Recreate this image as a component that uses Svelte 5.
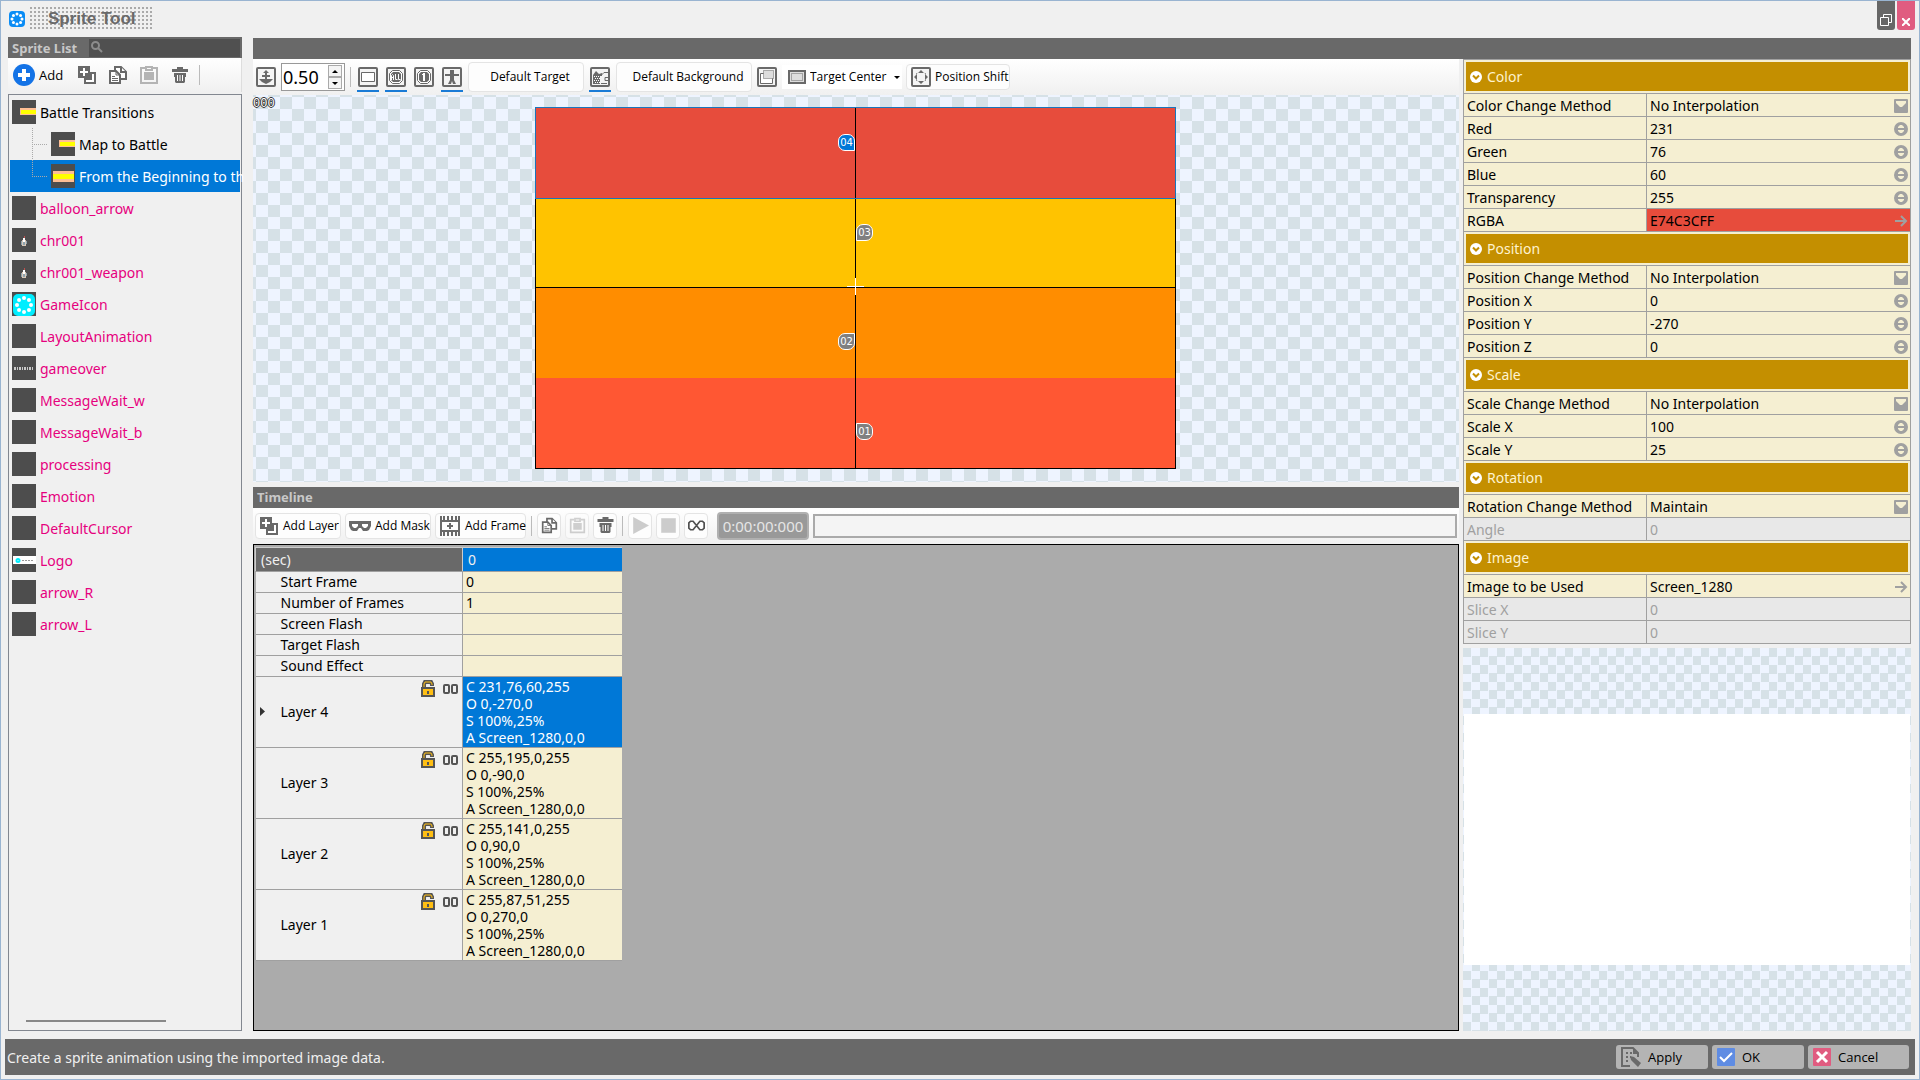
<script>
  let search = $state(``)
  let zoom = $state(`0.50`)
  let anchor = $state(`Target Center`)
  let selected = $state(`From the Beginning to th`)
  let activeLayer = $state(4)

  const sprites = [
    { name: `Battle Transitions`, thumb: `right`, kind: `own` },
    { name: `Map to Battle`, thumb: `right`, kind: `own`, child: true },
    { name: `From the Beginning to th`, thumb: `wide`, kind: `own`, child: true },
    { name: `balloon_arrow` },
    { name: `chr001`, thumb: `chr` },
    { name: `chr001_weapon`, thumb: `chr` },
    { name: `GameIcon`, thumb: `game` },
    { name: `LayoutAnimation` },
    { name: `gameover`, thumb: `over` },
    { name: `MessageWait_w` },
    { name: `MessageWait_b` },
    { name: `processing` },
    { name: `Emotion` },
    { name: `DefaultCursor` },
    { name: `Logo`, thumb: `logo` },
    { name: `arrow_R` },
    { name: `arrow_L` },
  ]

  const frameRows = [
    [`Start Frame`, `0`],
    [`Number of Frames`, `1`],
    [`Screen Flash`, ``],
    [`Target Flash`, ``],
    [`Sound Effect`, ``],
  ]

  const layers = [
    { id: 4, color: [231, 76, 60], y: -270 },
    { id: 3, color: [255, 195, 0], y: -90 },
    { id: 2, color: [255, 141, 0], y: 90 },
    { id: 1, color: [255, 87, 51], y: 270 },
  ]

  const groups = $state([
    {
      title: `Color`,
      rows: [
        { label: `Color Change Method`, value: `No Interpolation`, type: `select` },
        { label: `Red`, value: `231`, type: `spin` },
        { label: `Green`, value: `76`, type: `spin` },
        { label: `Blue`, value: `60`, type: `spin` },
        { label: `Transparency`, value: `255`, type: `spin` },
        { label: `RGBA`, value: `E74C3CFF`, type: `link`, red: true },
      ],
    },
    {
      title: `Position`,
      rows: [
        { label: `Position Change Method`, value: `No Interpolation`, type: `select` },
        { label: `Position X`, value: `0`, type: `spin` },
        { label: `Position Y`, value: `-270`, type: `spin` },
        { label: `Position Z`, value: `0`, type: `spin` },
      ],
    },
    {
      title: `Scale`,
      rows: [
        { label: `Scale Change Method`, value: `No Interpolation`, type: `select` },
        { label: `Scale X`, value: `100`, type: `spin` },
        { label: `Scale Y`, value: `25`, type: `spin` },
      ],
    },
    {
      title: `Rotation`,
      rows: [
        { label: `Rotation Change Method`, value: `Maintain`, type: `select` },
        { label: `Angle`, value: `0`, disabled: true },
      ],
    },
    {
      title: `Image`,
      rows: [
        { label: `Image to be Used`, value: `Screen_1280`, type: `link` },
        { label: `Slice X`, value: `0`, disabled: true },
        { label: `Slice Y`, value: `0`, disabled: true },
      ],
    },
  ])

  const dots = [0, 45, 90, 135, 180, 225, 270, 315].map((deg) => {
    const rad = (deg * Math.PI) / 180
    return [Math.cos(rad), Math.sin(rad)]
  })
  const fieldId = (label) => label.toLowerCase().replaceAll(` `, `-`)
</script>

{#snippet thumb(kind)}
  <svg class="thumb" width="24" height="24" viewBox="0 0 24 24">
    <rect width="24" height="24" fill="#4d4d4d" />
    {#if kind === `right`}
      <path fill="#ffbf94" d="M8 8h16v7H8z" />
      <path fill="#ff0" d="M9 10h15v4H9z" />
    {:else if kind === `wide`}
      <path fill="#ffbf94" d="M2 7h21v11H2z" />
      <path fill="#ff0" d="M2 10h21v5H2z" />
    {:else if kind === `chr`}
      <path fill="#d8c8b8" d="M10 12h4v6h-4z" />
      <path fill="#8fa3ad" d="M9 13h1v4H9zM14 13h1v3h-1zM11 14h2v3h-2z" />
      <path fill="#fff" d="M11 10h2v4h-2z" />
      <path fill="#c0504d" d="M12 8h1v2h-1z" />
    {:else if kind === `game`}
      <rect x="1" y="2" width="22" height="22" rx="5" fill="#0ef" />
      {#each dots as [x, y]}
        <circle cx={12 + x * 7} cy={13 + y * 7} r="2" fill="#fff" />
      {/each}
    {:else if kind === `over`}
      <path stroke="#fff" stroke-width="3" stroke-dasharray="2 1 1 1" opacity=".7" d="M2 12.500h20" />
    {:else if kind === `logo`}
      <path fill="#fff" d="M1 8h23v8H1z" />
      <circle cx="6" cy="12.500" r="1.500" fill="none" stroke="#0ef" stroke-width="2" />
      <path stroke="#999" stroke-width="1" stroke-dasharray="2 1" d="M10 12.500h11" />
    {/if}
  </svg>
{/snippet}

{#snippet copyIcon()}
  <svg width="20" height="20" viewBox="0 0 20 20" fill="#fff" stroke="#696969" stroke-width="2">
    <path d="M7 2h6l5 5v7H7z" />
    <path d="M13 2v5h5" />
    <path d="M2 6h6l4 4v8H2z" />
    <path fill="none" stroke-width="1" d="M4 11.500h3M4 13.500h6M4 15.500h6M8 6v4h4" />
  </svg>
{/snippet}

{#snippet pasteIcon()}
  <svg width="20" height="20" viewBox="0 0 20 20" fill="none" stroke="#b4b4b4" stroke-width="2">
    <path d="M6 3H2v15h16V3h-4" />
    <path d="M7 5V2h6v3z" />
    <path fill="#b4b4b4" stroke="none" d="M5 7h10v8H5z" />
  </svg>
{/snippet}

{#snippet trashIcon()}
  <svg width="16" height="17" viewBox="0 0 16 17" fill="#696969">
    <path d="M5 0h6v2h5v3H0V2h5zM2 6h12v4h-1v5l-1 1H4l-1-1v-5H2z" />
    <path stroke="#fff" d="M5.500 8v6M8 8v6M10.500 8v6" />
  </svg>
{/snippet}

{#snippet addLayerIcon()}
  <svg width="18" height="18" viewBox="0 0 18 18">
    <path fill="#696969" d="M6 6h12v12H6zM0 0h12v12H0z" />
    <path fill="#fff" d="M14 8h2v8H8v-2h6zM5 2h2v3h3v2H7v3H5V7H2V5h3z" />
  </svg>
{/snippet}

{#snippet boxed(name)}
  <svg width="20" height="20" viewBox="0 0 20 20" fill="none" stroke="#696969">
    <rect x="1" y="1" width="18" height="18" rx="1" fill="#f4f4f4" stroke-width="2" />
    {#if name === `zoom`}
      <path fill="#696969" stroke="none" d="M10 3l3 3h-2v2h3v2h-3v2h6l-3 3-4 2-4-2-3-3h6v-2H6V8h3V6H7z" />
    {:else if name === `frame`}
      <path fill="#fff" d="M3.500 5.500h13v9h-13z" />
    {:else if name === `all` || name === `one`}
      <path fill="#fff" d="M6.500 3.500h7l3 3v7l-3 3h-7l-3-3v-7z" />
      <path fill="#696969" stroke="none" d="M7 5h6l2 2v6l-2 2H7l-2-2V7z" />
      {#if name === `all`}
        <path stroke="#fff" d="M5.500 13V8.500l1-1 1 1V13M5.500 10.500h2M9.500 7v5.500h2M12.500 7v5.500h2" />
      {:else}
        <path fill="#fff" stroke="none" d="M9 6h2v8H9zM8 7h1v1H8z" />
      {/if}
    {:else if name === `body`}
      <path fill="#696969" stroke="none" d="M8 3h4v4h5v2h-5v4l2 4h-3l-1-3-1 3H6l2-4V9H3V7h5z" />
    {:else if name === `scene`}
      <path fill="#696969" stroke="none" d="M3 17V8l3-4 3 3 3-1v3h-2v8z" />
      <path stroke="#fff" stroke-dasharray="1 1" d="M4 9.500h6M5 11.500h6M4 13.500h6M5 15.500h6" />
      <path d="M11 8.500l3-3h5v5h-4v3h4M11 16.500h6" />
    {:else if name === `overlap`}
      <path fill="#fff" d="M3.500 6.500h12v10h-12z" />
      <path fill="#ddd" stroke-dasharray="1 1" d="M6.500 3.500h10v8h-10z" />
    {:else if name === `shift`}
      <path fill="#696969" stroke="none" d="M10 3l3 3H7zM10 17l3-3H7zM3 10l3-3v6zM17 10l-3-3v6z" />
      <path stroke-dasharray="1 1" d="M5 7l2-1M15 7l-2-1M5 13l2 1M15 13l-2 1" />
    {/if}
  </svg>
{/snippet}

{#snippet fieldIcon(type)}
  <svg class="field-icon" width="14" height="14" viewBox="0 0 14 14">
    {#if type === `select`}
      <rect width="14" height="14" rx="1" fill="#a0a0a0" />
      <path fill="#f5efd2" d="M2 2h10v2L8 8H6L2 4z" />
    {:else if type === `spin`}
      <circle cx="7" cy="7" r="7" fill="#a0a0a0" />
      <path fill="#f5efd2" d="M4 5l2-2h2l2 2v1H4zM4 8h6v1l-2 2H6L4 9z" />
    {:else if type === `link`}
      <path fill="none" stroke="#a0a0a0" stroke-width="2" d="M1 7h11M7 2l5 5-5 5" />
    {/if}
  </svg>
{/snippet}

<div class="window">
  <header class="titlebar">
    <svg width="16" height="16" viewBox="0 0 16 16">
      <rect width="16" height="16" rx="4" fill="#0a8cf5" />
      {#each dots as [x, y]}
        <circle cx={8 + x * 5} cy={8 + y * 5} r="1.500" fill="#fff" />
      {/each}
    </svg>
    <h1>Sprite Tool</h1>
    <div class="window-buttons">
      <button aria-label="Restore">
        <svg width="12" height="12" viewBox="0 0 12 12" fill="none" stroke="#fff">
          <path d="M3.500 3.500v-3h8v8h-3M.5 3.500h8v8h-8z" />
        </svg>
      </button>
      <button class="close" aria-label="Close">
        <svg width="8" height="8" viewBox="0 0 8 8" stroke="#fff" stroke-width="2">
          <path d="M0 0l8 8M8 0L0 8" />
        </svg>
      </button>
    </div>
  </header>

  <main>
    <aside>
      <div class="bar list-bar">
        <h2>Sprite List</h2>
        <label class="search">
          <svg width="12" height="12" viewBox="0 0 12 12" fill="none" stroke="#8c8c8c" stroke-width="2">
            <circle cx="4.500" cy="4.500" r="3.500" />
            <path d="M7 7l4 4" />
          </svg>
          <input bind:value={search} aria-label="Search sprites" />
        </label>
      </div>
      <div class="list-tools">
        <button class="add">
          <svg width="22" height="22" viewBox="0 0 22 22">
            <circle cx="11" cy="11" r="11" fill="#1473e6" />
            <path fill="#fff" d="M9 5h4v4h4v4h-4v4H9v-4H5V9h4z" />
          </svg>
          Add
        </button>
        <button aria-label="Duplicate">{@render addLayerIcon()}</button>
        <button aria-label="Copy">{@render copyIcon()}</button>
        <button aria-label="Paste">{@render pasteIcon()}</button>
        <button aria-label="Delete">{@render trashIcon()}</button>
        <span class="sep"></span>
      </div>
      <div class="list-box">
        <ul>
          {#each sprites as sprite}
            <li class:child={sprite.child} class:selected={selected === sprite.name}>
              <button class="sprite" class:own={sprite.kind === `own`} onclick={() => (selected = sprite.name)}>
                {@render thumb(sprite.thumb)}
                <span>{sprite.name}</span>
              </button>
            </li>
          {/each}
        </ul>
        <div class="scrollbar"></div>
      </div>
    </aside>

    <section class="work">
      <div class="bar"></div>
      <div class="columns">
        <div class="center">
          <div class="tools">
            <button class="tool" aria-label="Zoom">{@render boxed(`zoom`)}</button>
            <div class="zoom">
              <input bind:value={zoom} aria-label="Zoom level" />
              <div class="steps">
                <button aria-label="Zoom in"><svg width="6" height="3"><path d="M0 3l3-3 3 3z" /></svg></button>
                <button aria-label="Zoom out"><svg width="6" height="3"><path d="M0 0l3 3 3-3z" /></svg></button>
              </div>
            </div>
            <span class="sep"></span>
            <button class="toggle on" aria-label="Show frame">{@render boxed(`frame`)}</button>
            <button class="toggle on" aria-label="Show all numbers">{@render boxed(`all`)}</button>
            <button class="toggle" aria-label="Show one number">{@render boxed(`one`)}</button>
            <button class="toggle on" aria-label="Show target">{@render boxed(`body`)}</button>
            <button class="pick target">Default Target</button>
            <button class="toggle on" aria-label="Show background">{@render boxed(`scene`)}</button>
            <button class="pick background">Default Background</button>
            <button class="tool" aria-label="Overlap">{@render boxed(`overlap`)}</button>
            <label class="anchor">
              <svg width="18" height="14" viewBox="0 0 18 14" stroke="#696969">
                <rect x="1" y="1" width="16" height="12" fill="#ddd" stroke-width="2" />
                <path fill="none" stroke-dasharray="1 1" d="M3.500 3.500h11v7h-11z" />
              </svg>
              <select bind:value={anchor} aria-label="Anchor"><option>Target Center</option></select>
              <svg width="6" height="3"><path d="M0 0l3 3 3-3z" /></svg>
            </label>
            <button class="raised shift">{@render boxed(`shift`)}Position Shift</button>
          </div>

          <div class="canvas">
            <span class="counter">000</span>
            <div class="stage">
              {#each layers as layer}
                <div class="band" class:active={layer.id === activeLayer} style="background: rgb({layer.color.join(`,`)})">
                  <span class="tag" class:odd={layer.id % 2} class:low={layer.id < 3}>0{layer.id}</span>
                </div>
              {/each}
              <svg class="cross" width="17" height="17" viewBox="0 0 17 17"><path stroke="#fff" d="M8.500 0v17M0 8.500h17" /></svg>
            </div>
          </div>

          <div class="bar timeline-bar"><h2>Timeline</h2></div>
          <div class="tools">
            <button class="raised">{@render addLayerIcon()}Add Layer</button>
            <button class="raised mask">
              <svg width="22" height="10" viewBox="0 0 22 10">
                <path fill="#696969" d="M0 0h22v5l-2 4-2 1h-4l-2-3h-2l-2 3H4L2 9 0 5z" />
                <path fill="#fff" d="M3 3h6v2L7 7H5L3 5zM13 3h6v2l-2 2h-2l-2-2z" />
              </svg>
              Add Mask
            </button>
            <button class="raised film">
              <svg width="20" height="20" viewBox="0 0 20 20" fill="none" stroke="#696969" stroke-width="2">
                <path d="M1 0v20M19 0v20M0 5h20M0 15h20M10 7v6M7 10h6" />
                <path stroke-width="4" stroke-dasharray="2 2" d="M3 2h16M3 18h16" />
              </svg>
              Add Frame
            </button>
            <span class="sep"></span>
            <button class="raised square" aria-label="Copy frame">{@render copyIcon()}</button>
            <button class="raised square faded" aria-label="Paste frame">{@render pasteIcon()}</button>
            <button class="raised square" aria-label="Delete frame">{@render trashIcon()}</button>
            <span class="sep"></span>
            <button class="raised square" aria-label="Play"><svg width="14" height="14" viewBox="0 0 14 14"><path fill="#ccc" d="M1 0l13 7-13 7z" /></svg></button>
            <button class="raised square" aria-label="Stop"><svg width="14" height="14" viewBox="0 0 14 14"><path fill="#ccc" d="M1 1h12v12H1z" /></svg></button>
            <button class="raised square" aria-label="Loop">
              <svg width="20" height="12" viewBox="0 0 20 12" fill="none" stroke="#505050" stroke-width="2">
                <path d="M10 6L6 1H3L1 3v6l2 2h3l8-10h3l2 2v6l-2 2h-3z" />
              </svg>
            </button>
            <output>0:00:00:000</output>
            <div class="track"></div>
          </div>

          <div class="timeline">
            <table>
              <thead>
                <tr><th scope="col">(sec)</th><th scope="col" class="frame">0</th></tr>
              </thead>
              <tbody>
                {#each frameRows as [label, value]}
                  <tr><th scope="row"><div class="name">{label}</div></th><td>{value}</td></tr>
                {/each}
                {#each layers as layer}
                  <tr class="layer" class:active={layer.id === activeLayer} onclick={() => (activeLayer = layer.id)}>
                    <th scope="row">
                      <div class="layer-head">
                        <svg class="caret" width="5" height="9" viewBox="0 0 5 9"><path fill="#333" d="M0 0l5 4.500-5 4.500z" /></svg>
                        <span>Layer {layer.id}</span>
                        <button aria-label="Lock layer">
                          <svg width="14" height="17" viewBox="0 0 14 17">
                            <path fill="none" stroke="#555" stroke-width="4" d="M3 9V4l1-2h6l1 2v2" />
                            <path fill="none" stroke="#ffbf14" stroke-width="1" d="M3 9V4l1-2h6l1 2v1" />
                            <path fill="#ffbf14" stroke="#555" stroke-width="2" d="M1 8h12v8H1z" />
                            <path fill="#555" d="M6 11h2v3H6z" />
                          </svg>
                        </button>
                        <button aria-label="Link layer">
                          <svg width="15" height="10" viewBox="0 0 15 10" fill="none" stroke="#555" stroke-width="2">
                            <rect x="1" y="1" width="5" height="8" rx="1" />
                            <rect x="9" y="1" width="5" height="8" rx="1" />
                          </svg>
                        </button>
                      </div>
                    </th>
                    <td>
                      C {layer.color.join(`,`)},255<br />O 0,{layer.y},0<br />S 100%,25%<br />A Screen_1280,0,0
                    </td>
                  </tr>
                {/each}
              </tbody>
            </table>
          </div>
        </div>

        <div class="right">
          <table class="props">
            <colgroup><col class="label-col" /><col /></colgroup>
            {#each groups as group}
              <tbody>
                <tr class="group">
                  <th colspan="2">
                    <button>
                      <svg width="12" height="12" viewBox="0 0 12 12">
                        <circle cx="6" cy="6" r="6" fill="#fff" />
                        <path fill="none" stroke="#c48f00" stroke-width="2" d="M3 4.500l3 3 3-3" />
                      </svg>
                      {group.title}
                    </button>
                  </th>
                </tr>
                {#each group.rows as row}
                  <tr class:disabled={row.disabled}>
                    <th scope="row"><label for={fieldId(row.label)}>{row.label}</label></th>
                    <td class:red={row.red}>
                      <div class="field">
                        {#if row.type === `select`}
                          <select id={fieldId(row.label)} bind:value={row.value}>
                            <option>No Interpolation</option>
                            <option>Maintain</option>
                          </select>
                        {:else}
                          <input id={fieldId(row.label)} bind:value={row.value} disabled={row.disabled} />
                        {/if}
                        {@render fieldIcon(row.type)}
                      </div>
                    </td>
                  </tr>
                {/each}
              </tbody>
            {/each}
          </table>
          <div class="preview"><div class="image"></div></div>
        </div>
      </div>
    </section>
  </main>

  <footer>
    <p>Create a sprite animation using the imported image data.</p>
    <button>
      <svg width="20" height="20" viewBox="0 0 20 20" fill="none" stroke="#696969" stroke-width="2">
        <path d="M9 19H1V1h11l5 5v4" />
        <path stroke-dasharray="2 2" d="M5 6h7M5 10h5M5 14h4" />
        <path fill="#696969" stroke="none" d="M12 1l6 6h-6zM9 9l4 1 7 6-3 4-7-7z" />
      </svg>
      Apply
    </button>
    <button>
      <svg width="18" height="18" viewBox="0 0 18 18">
        <rect width="18" height="18" rx="1" fill="#5f8ce3" />
        <path fill="none" stroke="#fff" stroke-width="2" d="M3 9l4 4 8-8" />
      </svg>
      OK
    </button>
    <button class="cancel">
      <svg width="18" height="18" viewBox="0 0 18 18">
        <rect width="18" height="18" rx="1" fill="#e05c80" />
        <path stroke="#fff" stroke-width="3" d="M4 4l10 10M14 4L4 14" />
      </svg>
      Cancel
    </button>
  </footer>
</div>

<style>
  :global(body) {
    margin: 0;
  }
  .window {
    --grey: #696969;
    --cream: #f5efd2;
    --line: #a0a0a0;
    --blue: #0078d7;
    --ui: "Open Sans", "Noto Sans", sans-serif;
    box-sizing: border-box;
    display: flex;
    flex-direction: column;
    min-height: 100vh;
    border: 1px solid #99b4d1;
    background: #f0f0f0;
    color: #000;
    font: 14px/17px "Noto Sans", sans-serif;
  }
  button,
  input,
  select {
    box-sizing: border-box;
    margin: 0;
    padding: 0;
    border: none;
    border-radius: 0;
    background: none;
    color: inherit;
    font: inherit;
    outline: none;
    appearance: none;
  }
  button {
    display: flex;
    align-items: center;
    cursor: pointer;
    white-space: nowrap;
  }
  svg {
    display: block;
    flex: none;
  }
  h1,
  h2,
  p,
  ul {
    margin: 0;
    padding: 0;
  }

  .titlebar {
    display: flex;
    align-items: center;
    gap: 5px;
    height: 36px;
    padding: 0 4px 0 8px;
  }
  h1 {
    box-sizing: border-box;
    width: 123px;
    height: 24px;
    padding-left: 18px;
    background: radial-gradient(circle at 1px 1px, #aaa 1px, transparent 1px) 0 0 / 4px 4px;
    color: var(--grey);
    font: bold 17px/24px "Liberation Sans Narrow", "Liberation Sans", sans-serif;
    white-space: nowrap;
  }
  .window-buttons {
    display: flex;
    align-self: flex-start;
    gap: 2px;
    margin-left: auto;
  }
  .window-buttons button {
    width: 18px;
    height: 29px;
    padding-bottom: 4px;
    border-radius: 0 0 3px 3px;
    background: #666;
    align-items: flex-end;
    justify-content: center;
  }
  .window-buttons .close {
    background: #e05c80;
  }

  main {
    display: flex;
    flex: 1;
    gap: 11px;
    padding: 0 8px 0 7px;
  }
  aside {
    display: flex;
    flex: none;
    flex-direction: column;
    width: 234px;
  }
  .bar {
    display: flex;
    flex: none;
    align-items: center;
    height: 21px;
    padding-left: 4px;
    background: var(--grey);
  }
  h2 {
    color: #c8c8c8;
    font: bold 13px/17px "Noto Sans", sans-serif;
    white-space: nowrap;
  }
  .list-bar {
    gap: 12px;
    padding-right: 2px;
  }
  .list-bar h2 {
    padding-top: 2px;
  }
  .search {
    display: flex;
    flex: 1;
    gap: 4px;
    height: 18px;
    min-width: 0;
    padding: 2px;
    box-sizing: border-box;
    background: #505050;
  }
  .search input {
    flex: 1;
    min-width: 0;
    color: #fff;
  }
  .list-tools {
    display: flex;
    align-items: center;
    height: 34px;
    padding-left: 5px;
    border-right: 1px solid #ddd;
    background: linear-gradient(#fff, #f0f0f0);
  }
  .list-tools button {
    justify-content: center;
    width: 31px;
  }
  .list-tools .add {
    gap: 4px;
    width: 58px;
    justify-content: flex-start;
    font: 13px/18px var(--ui);
  }
  .sep {
    width: 1px;
    height: 20px;
    margin: 0 1px;
    background: #bbb;
  }
  .list-tools .sep {
    margin-left: 4px;
  }
  .list-box {
    display: flex;
    flex: 1;
    flex-direction: column;
    justify-content: space-between;
    margin-top: 2px;
    padding: 1px;
    border: 1px solid #828790;
  }
  ul {
    list-style: none;
  }
  li {
    position: relative;
    padding-left: 2px;
  }
  li.child {
    padding-left: 41px;
  }
  li.selected {
    background: var(--blue);
  }
  li.child::before {
    content: "";
    position: absolute;
    left: 22px;
    top: -16px;
    width: 14px;
    height: 32px;
    border: 1px dotted #aaa;
    border-width: 0 0 1px 1px;
  }
  li.child:nth-child(2)::before {
    top: 0;
    height: 16px;
  }
  .sprite {
    gap: 4px;
    width: 100%;
    height: 32px;
    color: #e6007e;
  }
  .sprite.own {
    color: #000;
  }
  .selected .sprite {
    color: #fff;
  }
  .scrollbar {
    width: 140px;
    height: 2px;
    margin: 0 0 7px 16px;
    background: #888;
  }

  .work {
    display: flex;
    flex: 1;
    flex-direction: column;
    min-width: 0;
    padding-top: 1px;
  }
  .columns {
    display: flex;
    flex: 1;
    gap: 4px;
  }
  .center {
    display: flex;
    flex: 1;
    flex-direction: column;
    min-width: 0;
  }
  .tools {
    display: flex;
    flex: none;
    align-items: center;
    gap: 4px;
    box-sizing: border-box;
    height: 36px;
    padding: 0 2px;
    background: linear-gradient(#fff, #f0f0f0);
    font: 12px/18px var(--ui);
  }
  .tool {
    justify-content: center;
    width: 22px;
    height: 26px;
  }
  .toggle {
    justify-content: center;
    box-sizing: border-box;
    width: 22px;
    height: 27px;
    margin: 2px 1px 0;
    border-bottom: 2px solid transparent;
  }
  .toggle.on {
    border-color: #1a7bd6;
  }
  .zoom {
    display: flex;
    box-sizing: border-box;
    width: 64px;
    height: 28px;
    border: 1px solid #999;
    background: #fff;
  }
  .zoom input {
    flex: 1;
    min-width: 0;
    padding-left: 1px;
    font: 18px/24px "Noto Sans", sans-serif;
  }
  .steps {
    width: 15px;
    padding: 1px;
  }
  .steps button {
    justify-content: center;
    width: 14px;
    height: 12px;
    border: 1px solid #aaa;
    background: #f4f4f4;
  }
  .pick,
  .raised {
    box-sizing: border-box;
    border: 1px solid #e4e4e4;
    border-radius: 4px;
    background: #fdfdfd;
  }
  .pick {
    justify-content: center;
    height: 30px;
  }
  .target {
    width: 116px;
    padding-left: 8px;
  }
  .background {
    width: 136px;
    padding-left: 8px;
  }
  .anchor {
    display: flex;
    align-items: center;
    gap: 4px;
    width: 112px;
    height: 24px;
    padding: 0 2px 0 6px;
    background: #fff;
  }
  .anchor select {
    flex: 1;
    min-width: 0;
  }
  .raised {
    gap: 5px;
    width: 86px;
    height: 26px;
    padding-left: 4px;
  }
  .mask {
    gap: 4px;
    padding-left: 3px;
  }
  .shift {
    gap: 4px;
    width: 104px;
  }
  .film {
    width: 91px;
  }
  .raised.square {
    justify-content: center;
    width: 24px;
    padding: 0;
  }
  .square svg {
    width: 17px;
    height: 17px;
  }
  .faded {
    opacity: .6;
  }
  output {
    box-sizing: border-box;
    width: 92px;
    height: 28px;
    margin-left: 5px;
    border: 2px solid #b0b0b0;
    border-radius: 4px;
    background: #999;
    color: #e6e6e6;
    font: 15px/24px "Noto Sans", sans-serif;
    text-align: center;
  }
  .track {
    flex: 1;
    height: 20px;
    border: 2px solid #aaa;
    background: #f4f4f4;
  }

  .canvas {
    position: relative;
    display: flex;
    flex: 389 1 0;
    align-items: center;
    justify-content: center;
    padding-right: 1px;
    background: repeating-conic-gradient(#eef4ff 0 25%, #d6e1e7 0 50%) 3px 2px / 24px 24px;
  }
  .counter {
    position: absolute;
    left: 0;
    top: 2px;
    color: #fff;
    font: 12px/15px "Liberation Mono", monospace;
    text-shadow: 1px 0 #333, -1px 0 #333, 0 1px #333, 0 -1px #333;
  }
  .stage {
    position: relative;
    border: 1px solid #000;
    border-top: none;
  }
  .band {
    position: relative;
    box-sizing: border-box;
    width: 639px;
    height: 90px;
    background-clip: padding-box;
  }
  .band.active {
    outline: 1px solid #1a75bb;
    z-index: 1;
  }
  .band:nth-child(2) {
    border-bottom: 1px solid #000;
  }
  .band::after {
    content: "";
    position: absolute;
    left: 319px;
    top: 0;
    width: 1px;
    height: 100%;
    background: #000;
  }
  .tag {
    position: absolute;
    right: 320px;
    top: 26px;
    box-sizing: border-box;
    width: 17px;
    height: 17px;
    border: 1px solid #fff;
    border-radius: 7px 7px 0 7px;
    background: #808080;
    color: #fff;
    font: 10px/15px "DejaVu Sans", sans-serif;
    text-align: center;
  }
  .tag.odd {
    right: auto;
    left: 320px;
    border-radius: 7px 7px 7px 0;
  }
  .tag.low {
    top: 45px;
    border-radius: 7px 0 7px 7px;
  }
  .tag.odd.low {
    border-radius: 0 7px 7px 7px;
  }
  .active .tag {
    background: var(--blue);
  }
  .cross {
    position: absolute;
    left: 311px;
    top: 170px;
    z-index: 2;
  }

  .timeline-bar {
    margin-top: 5px;
  }
  .timeline {
    box-sizing: border-box;
    flex: 485 1 0;
    padding: 2px 1px 1px;
    border: 1px solid #000;
    background: #ababab;
  }
  table {
    border-spacing: 0;
    border-collapse: collapse;
  }
  th {
    font-weight: normal;
    text-align: left;
  }
  th,
  td {
    padding: 0;
  }
  .timeline th,
  .timeline td {
    box-sizing: border-box;
    height: 21px;
    border-bottom: 1px solid var(--line);
  }
  .timeline th {
    width: 207px;
    border-right: 1px solid var(--line);
    background: #f0f0f0;
  }
  .timeline td {
    width: 159px;
    padding-left: 3px;
    background: var(--cream);
  }
  .timeline thead th {
    height: 24px;
    padding-left: 5px;
    border: 1px solid #ccc;
    border-bottom-color: var(--line);
    background: var(--grey);
    color: #f0f0f0;
  }
  .timeline thead .frame {
    width: 159px;
    background: var(--blue);
    border-right: none;
  }
  .name {
    padding-left: 25px;
    line-height: 20px;
  }
  .timeline .layer th,
  .timeline .layer td {
    height: 71px;
  }
  .timeline .layer.active td {
    background: var(--blue);
    color: #fff;
  }
  .layer-head {
    display: flex;
    align-items: center;
    height: 70px;
    padding: 0 2px 0 4px;
  }
  .layer-head span {
    flex: 1;
    padding-left: 16px;
  }
  .layer-head button {
    align-self: flex-start;
    justify-content: center;
    width: 24px;
    height: 24px;
  }
  .layer-head button + button {
    width: 20px;
  }
  .caret {
    visibility: hidden;
  }
  .active .caret {
    visibility: visible;
  }

  .right {
    display: flex;
    flex: none;
    flex-direction: column;
    width: 448px;
  }
  .props {
    width: 100%;
    table-layout: fixed;
  }
  .label-col {
    width: 183px;
  }
  .props th,
  .props td {
    box-sizing: border-box;
    height: 23px;
    padding: 1px 2px 0 3px;
    border: 1px solid var(--line);
    background: var(--cream);
  }
  .props .group th {
    height: 34px;
    padding: 2px;
  }
  .group button {
    gap: 5px;
    width: 100%;
    height: 29px;
    padding-left: 4px;
    background: #c48f00;
    color: #fff3cf;
  }
  .props .disabled th,
  .props .disabled td {
    background: #e8e8e8;
    color: #a0a0a0;
  }
  .props .red {
    background: #e74c3c;
  }
  .field {
    display: flex;
    align-items: center;
  }
  .field input,
  .field select {
    flex: 1;
    min-width: 0;
    height: 20px;
  }
  .preview {
    display: flex;
    flex: 1;
    align-items: center;
    margin-top: 4px;
    padding: 0 1px;
    background: repeating-conic-gradient(#eef4ff 0 25%, #d6e1e7 0 50%) 0 0 / 17px 17px;
  }
  .image {
    flex: 1;
    aspect-ratio: 16 / 9;
    background: #fff;
  }

  footer {
    display: flex;
    align-items: center;
    gap: 4px;
    box-sizing: border-box;
    height: 36px;
    margin: 8px 4px 4px;
    padding: 0 6px 0 2px;
    background: var(--grey);
  }
  footer p {
    margin-right: auto;
    color: #f0f0f0;
  }
  footer button {
    gap: 7px;
    width: 92px;
    height: 24px;
    padding-left: 5px;
    border-radius: 3px;
    background: #b4b4b4;
    font: 13px/18px var(--ui);
  }
  footer .cancel {
    width: 101px;
  }
</style>
